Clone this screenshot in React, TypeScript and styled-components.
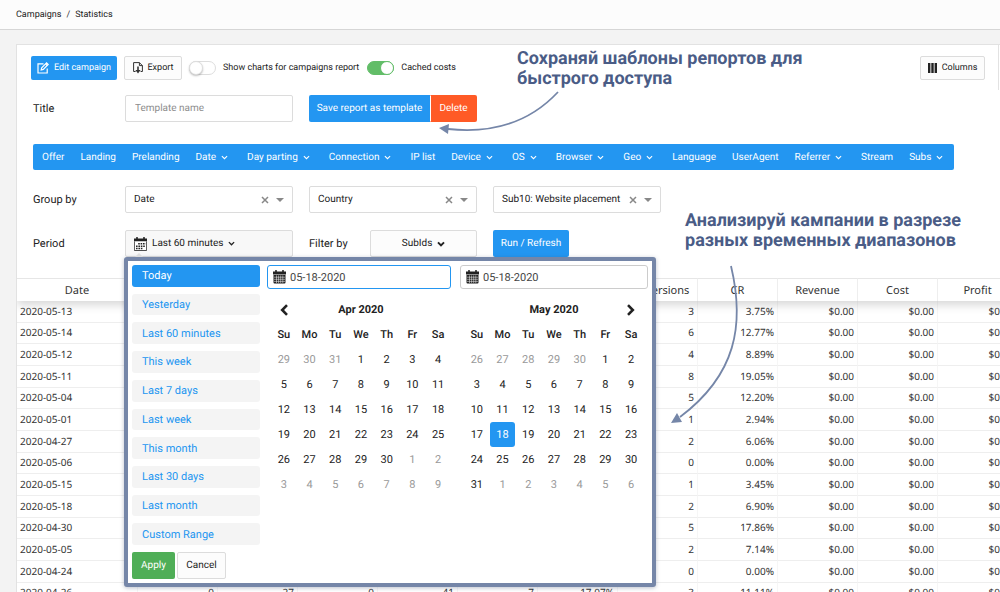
import React from "react";
import styled, { createGlobalStyle } from "styled-components";

const blue = "#2396f1";
const slate = "#7586a8";
const line = "#dcdcdc";

const Global = createGlobalStyle`
  *, *::before, *::after { box-sizing: border-box; }
  body {
    margin: 0;
    background: #f3f3f3;
    color: #333;
    font-family: Roboto, sans-serif;
    font-size: 10px;
    text-rendering: geometricPrecision;
  }
  button, input, select {
    font-family: inherit;
    font-size: inherit;
    color: inherit;
    text-rendering: inherit;
    margin: 0;
  }
  button { cursor: pointer; }
`;

const Page = styled.div`
  position: relative;
  height: 100vh;
  overflow: hidden;
`;

const Breadcrumbs = styled.nav`
  display: flex;
  align-items: center;
  gap: 5px;
  height: 30px;
  padding: 0 16px;
  font-size: 9px;
  background: #fcfcfc;
  border-bottom: 1px solid #d6d6d6;
  a { color: #222; text-decoration: none; }
`;

const Card = styled.main`
  margin: 14px 0 0 16px;
  background: #fff;
  border: 1px solid #e2e2e2;
  border-right: 0;
`;

const Toolbar = styled.div`
  display: flex;
  align-items: center;
  height: 45px;
  margin-right: 1px;
  padding: 0 13px 0 14px;
  border-right: 1px solid #e2e2e2;
`;

const Button = styled.button<{ $tone?: "blue" | "red" | "green"; $h?: number; $w?: number; $size?: number }>`
  display: inline-flex;
  align-items: center;
  justify-content: center;
  gap: 5px;
  height: ${(p) => p.$h ?? 27}px;
  width: ${(p) => (p.$w ? `${p.$w}px` : "auto")};
  padding: 0 ${(p) => (p.$w ? 0 : 8)}px;
  white-space: nowrap;
  font-size: ${(p) => p.$size ?? 10}px;
  border-radius: 2px;
  border: 1px solid ${(p) => (p.$tone ? "transparent" : line)};
  background: ${(p) =>
    p.$tone === "blue" ? blue : p.$tone === "red" ? "#ff5a26" : p.$tone === "green" ? "#4fae57" : "#fcfcfc"};
  color: ${(p) => (p.$tone ? "#fff" : "#222")};
`;

const ExportSlot = styled.div`
  margin: 0 7px;
`;

const Switch = styled.label`
  display: flex;
  align-items: center;
  gap: 7px;
  margin-right: 8px;
  font-size: 9px;
  color: #222;
  input {
    appearance: none;
    position: relative;
    width: 27px;
    height: 14px;
    border-radius: 7px;
    border: 1px solid #ddd;
    background: #fff;
  }
  input::after {
    content: "";
    position: absolute;
    top: -1px;
    left: -1px;
    width: 14px;
    height: 14px;
    border-radius: 50%;
    background: #fff;
    border: 1px solid #ddd;
    box-shadow: 0 1px 2px rgba(0, 0, 0, 0.25);
  }
  input:checked { background: #62bd68; border-color: #62bd68; }
  input:checked::after { left: 12px; border-color: #62bd68; box-shadow: none; }
`;

const Spacer = styled.div`
  flex: 1;
`;

const Form = styled.div`
  display: flex;
  flex-direction: column;
  gap: 17px;
  padding: 5px 16px 21px;
`;

const Row = styled.div`
  display: grid;
  grid-template-columns: 76px 168px 168px 168px;
  column-gap: 16px;
  align-items: center;
`;

const Label = styled.label`
  font-size: 11px;
  color: #222;
`;

const TextInput = styled.input`
  width: 100%;
  height: 27px;
  padding: 0 9px;
  border: 1px solid ${line};
  border-radius: 2px;
  background: #fff;
  &::placeholder { color: #8d8d8d; }
`;

const Group = styled.div`
  display: flex;
  ${Button}:first-child { border-radius: 2px 0 0 2px; }
  ${Button}:last-child { border-radius: 0 2px 2px 0; border-left-color: #fff; }
`;

const Menu = styled.nav`
  display: flex;
  align-items: center;
  align-self: flex-start;
  height: 26px;
  margin: 5px 0 -1px;
  padding-left: 1px;
  border-radius: 2px;
  background: ${blue};
`;

const MenuItem = styled.button<{ $drop?: boolean }>`
  display: flex;
  align-items: center;
  gap: 5px;
  height: 26px;
  padding: 0 ${(p) => (p.$drop ? 11 : 8)}px 0 8px;
  border: 0;
  background: none;
  color: #fff;
  white-space: nowrap;
`;

const SelectBox = styled.div`
  position: relative;
  display: grid;
  select {
    appearance: none;
    width: 100%;
    height: 27px;
    padding: 0 36px 0 8px;
    border: 1px solid ${line};
    border-radius: 2px;
    background: #fff;
    color: #222;
  }
`;

const SelectTools = styled.div`
  position: absolute;
  right: 9px;
  top: 0;
  height: 27px;
  display: flex;
  align-items: center;
  gap: 7px;
  button { display: flex; padding: 0; border: 0; background: none; }
`;

const PeriodField = styled.div`
  position: relative;
`;

const PeriodButton = styled(Button)`
  width: 100%;
  justify-content: flex-start;
  background: #f8f8f8;
`;

const FilterField = styled.div`
  display: flex;
  align-items: center;
  justify-content: space-between;
`;

const Popup = styled.section`
  position: absolute;
  z-index: 2;
  top: 27px;
  left: -1px;
  display: flex;
  width: 532px;
  height: 330px;
  padding: 4px;
  border: 4px solid ${slate};
  border-radius: 3px;
  background: #fff;
  box-shadow: 0 1px 4px rgba(60, 75, 110, 0.35);
  &::before {
    content: "";
    position: absolute;
    z-index: -1;
    left: 7px;
    top: -8px;
    border: 4px solid transparent;
    border-top: 0;
    border-bottom-color: #ddd;
  }
`;

const Presets = styled.div`
  display: flex;
  flex-direction: column;
  gap: 7px;
  width: 128px;
  margin-right: 7px;
`;

const Preset = styled.button<{ $on?: boolean }>`
  height: 22px;
  padding: 0 10px;
  text-align: left;
  font-size: 11px;
  border: 0;
  border-radius: 3px;
  background: ${(p) => (p.$on ? blue : "#f4f4f4")};
  color: ${(p) => (p.$on ? "#fff" : blue)};
`;

const Actions = styled.div`
  display: flex;
  gap: 2px;
`;

const Month = styled.div`
  width: 184px;
  margin-right: 9px;
  &:last-child { width: 188px; margin-right: 0; }
`;

const DateField = styled.label<{ $on?: boolean }>`
  display: flex;
  align-items: center;
  gap: 4px;
  height: 24px;
  padding: 0 5px;
  border: 1px solid ${(p) => (p.$on ? blue : "#ccc")};
  border-radius: 3px;
  input {
    width: 100%;
    min-width: 0;
    padding: 0;
    border: 0;
    outline: 0;
    font-size: 11px;
    color: #444;
    background: none;
  }
`;

const Calendar = styled.table`
  width: 180px;
  margin: 8px 0 0 4px;
  table-layout: fixed;
  border-collapse: collapse;
  font-size: 11px;
  text-align: center;
  tr { height: 25px; }
  th, td { padding: 0; }
  th { font-weight: 500; color: #222; }
`;

const Title = styled.th`
  && { font-weight: 700; }
`;

const Arrow = styled.button`
  display: flex;
  justify-content: center;
  width: 100%;
  padding: 0;
  border: 0;
  background: none;
`;

const Day = styled.td<{ $off?: boolean; $on?: boolean }>`
  color: ${(p) => (p.$on ? "#fff" : p.$off ? "#999" : "#222")};
  background: ${(p) => (p.$on ? blue : "none")};
  border-radius: 3px;
`;

const Report = styled.table`
  width: 1001px;
  table-layout: fixed;
  border-collapse: separate;
  border-spacing: 0;
  font-family: "Noto Sans", sans-serif;
  font-size: 10px;
  thead { position: relative; box-shadow: 0 4px 10px rgba(0, 0, 0, 0.16); }
  th {
    height: 23px;
    padding: 0;
    font-size: 11px;
    line-height: 15px;
    font-weight: 400;
    text-align: center;
    background: #fff;
    border-top: 1px solid #e6e6e6;
    border-right: 1px solid #eee;
  }
  td {
    height: 22px;
    padding: 0 3px 2px;
    line-height: 14px;
    text-align: right;
    border-bottom: 1px solid #eee;
    border-right: 1px solid #f6f6f6;
  }
  td:first-child { text-align: left; }
  tbody tr:nth-child(3n + 2) td { height: 21px; }
`;

const ReportWrap = styled.div`
  overflow: hidden;
`;

const Note = styled.p<{ $x: number; $y: number }>`
  position: absolute;
  left: ${(p) => p.$x}px;
  top: ${(p) => p.$y}px;
  margin: 0;
  font-size: 18px;
  line-height: 20px;
  font-weight: 700;
  color: #4a5c86;
  white-space: nowrap;
`;

const Arrows = styled.svg`
  position: absolute;
  z-index: 3;
  left: 0;
  top: 0;
  pointer-events: none;
`;

const Chevron = ({ w = 7, sw = 1.2 }: { w?: number; sw?: number }) => (
  <svg width={w} height={w} viewBox="0 0 8 8" fill="none" stroke="currentColor" strokeWidth={sw}>
    <path d="M1 2.4 4 5.4 7 2.4" />
  </svg>
);

const IconSvg = styled.svg`
  flex-shrink: 0;
`;

const CalendarIcon = ({ open }: { open?: boolean }) => (
  <IconSvg width="13" height="14" viewBox="0 0 13 14" fill="#222">
    <path d="M0 1.5h2.2V.6a.8.8 0 0 1 1.6 0v.9h5.4V.6a.8.8 0 0 1 1.6 0v.9H13v3H0z" />
    {open ? (
      <>
        <path d="M.4 4.5V13.5h12.2V4.5" fill="#fff" stroke="#222" strokeWidth=".8" />
        <path
          d="M4.2 6.8H11.6M2 9.2H11.6M2 11.6H9"
          stroke="#222"
          strokeWidth="1.5"
          strokeDasharray="1.6 .8"
        />
      </>
    ) : (
      <>
        <path d="M.5 5h12v7.5a1 1 0 0 1-1 1h-10a1 1 0 0 1-1-1z" />
        <path d="M1 7.2H12M1 9.3H12M1 11.4H12M3.5 5.4V13M5.6 5.4V13M7.7 5.4V13M9.8 5.4V13" stroke="#fff" strokeWidth=".5" />
      </>
    )}
  </IconSvg>
);

const EditIcon = () => (
  <svg width="12" height="12" viewBox="0 0 12 12" fill="none" stroke="#fff" strokeWidth="1.2">
    <path d="M6.5 1.8H1v9.2h9.2V6.5" />
    <path d="M4.2 8 4.7 5.8 9.6 .9 11.2 2.5 6.3 7.4z" />
    <path d="M8.6 2 10.1 3.5" />
  </svg>
);

const ExportIcon = () => (
  <svg width="10" height="12" viewBox="0 0 10 12" fill="none" stroke="#333" strokeWidth="1">
    <path d="M2.6 9.5H.6V.6H6.4L9.4 3.6V9.5H7.6" />
    <path d="M6.4 .6V3.6H9.4" />
    <path d="M5 4.5V9" strokeWidth="1.6" />
    <path d="M2.4 8H7.6L5 11.6z" fill="#333" stroke="none" />
  </svg>
);

const ColumnsIcon = () => (
  <svg width="9" height="10" viewBox="0 0 9 10" fill="#222">
    <path d="M0 0h2.4v10H0zM3.3 0h2.4v10H3.3zM6.6 0H9v10H6.6z" />
  </svg>
);

const BigChevron = ({ right }: { right?: boolean }) => (
  <svg width="10" height="12" viewBox="0 0 10 12" fill="none" stroke="#222" strokeWidth="2.6">
    <path d={right ? "M2 1.2 6.8 6 2 10.8" : "M8 1.2 3.2 6 8 10.8"} />
  </svg>
);

const menu: [string, boolean][] = [
  ["Offer", false], ["Landing", false], ["Prelanding", false], ["Date", true],
  ["Day parting", true], ["Connection", true], ["IP list", false], ["Device", true],
  ["OS", true], ["Browser", true], ["Geo", true], ["Language", false],
  ["UserAgent", false], ["Referrer", true], ["Stream", false], ["Subs", true],
];

const presets = [
  "Today", "Yesterday", "Last 60 minutes", "This week", "Last 7 days",
  "Last week", "This month", "Last 30 days", "Last month", "Custom Range",
];

const rows: [string, string, string][] = [
  ["2020-05-13", "3", "3.75%"],
  ["2020-05-14", "6", "12.77%"],
  ["2020-05-12", "4", "8.89%"],
  ["2020-05-11", "8", "19.05%"],
  ["2020-05-04", "5", "12.20%"],
  ["2020-05-01", "1", "2.94%"],
  ["2020-04-27", "2", "6.06%"],
  ["2020-05-06", "0", "0.00%"],
  ["2020-05-15", "1", "3.45%"],
  ["2020-05-18", "2", "6.90%"],
  ["2020-04-30", "5", "17.86%"],
  ["2020-05-05", "2", "7.14%"],
  ["2020-04-24", "0", "0.00%"],
  ["2020-04-26", "3", "11.11%"],
];

const lastRow = ["0", "27", "0", "41", "7", "17.07%"];

function GroupSelect({ value, label }: { value: string; label: string }) {
  return (
    <SelectBox>
      <select aria-label={label} defaultValue={value}>
        <option>{value}</option>
      </select>
      <SelectTools>
        <button aria-label={`Clear ${value}`}>
          <svg width="8" height="8" viewBox="0 0 8 8" stroke="#888" strokeWidth="1.5">
            <path d="M1 1 7 7M7 1 1 7" />
          </svg>
        </button>
        <svg width="8" height="4" viewBox="0 0 8 4" fill="#888">
          <path d="M0 0H8L4 4z" />
        </svg>
      </SelectTools>
    </SelectBox>
  );
}

function MonthTable({ title, lead, days, leadEnd, selected, next }: {
  title: string; lead: number; days: number; leadEnd: number; selected?: number; next?: boolean;
}) {
  const cells = Array.from({ length: 42 }, (_, i) => {
    const d = i - lead + 1;
    if (d < 1) return { n: leadEnd + d, off: true };
    if (d > days) return { n: d - days, off: true };
    return { n: d, off: false };
  });
  return (
    <Calendar>
      <thead>
        <tr>
          <th>{!next && <Arrow aria-label="Previous month"><BigChevron /></Arrow>}</th>
          <Title colSpan={5}>{title}</Title>
          <th>{next && <Arrow aria-label="Next month"><BigChevron right /></Arrow>}</th>
        </tr>
        <tr>
          {["Su", "Mo", "Tu", "We", "Th", "Fr", "Sa"].map((d) => <th key={d}>{d}</th>)}
        </tr>
      </thead>
      <tbody>
        {[0, 1, 2, 3, 4, 5].map((w) => (
          <tr key={w}>
            {cells.slice(w * 7, w * 7 + 7).map((c, i) => (
              <Day key={i} $off={c.off} $on={!c.off && c.n === selected}>{c.n}</Day>
            ))}
          </tr>
        ))}
      </tbody>
    </Calendar>
  );
}

function PeriodPopup() {
  return (
    <Popup aria-label="Period">
      <Presets>
        {presets.map((p, i) => <Preset key={p} $on={i === 0}>{p}</Preset>)}
        <Actions>
          <Button $tone="green">Apply</Button>
          <Button $w={49}>Cancel</Button>
        </Actions>
      </Presets>
      <Month>
        <DateField $on>
          <CalendarIcon />
          <input aria-label="Start date" defaultValue="05-18-2020" />
        </DateField>
        <MonthTable title="Apr 2020" lead={3} days={30} leadEnd={31} />
      </Month>
      <Month>
        <DateField>
          <CalendarIcon />
          <input aria-label="End date" defaultValue="05-18-2020" />
        </DateField>
        <MonthTable title="May 2020" lead={5} days={31} leadEnd={30} selected={18} next />
      </Month>
    </Popup>
  );
}

export default function App() {
  return (
    <Page>
      <Global />
      <Breadcrumbs>
        <a href="#campaigns">Campaigns</a>
        <span>/</span>
        <a href="#statistics">Statistics</a>
      </Breadcrumbs>
      <Card>
        <Toolbar>
          <Button $tone="blue" $h={24} $w={86} $size={9}><EditIcon />Edit campaign</Button>
          <ExportSlot>
            <Button $h={24} $w={58} $size={9}><ExportIcon />Export</Button>
          </ExportSlot>
          <Switch><input type="checkbox" />Show charts for campaigns report</Switch>
          <Switch><input type="checkbox" defaultChecked />Cached costs</Switch>
          <Spacer />
          <Button $h={24} $w={65} $size={9}><ColumnsIcon />Columns</Button>
        </Toolbar>
        <Form>
          <Row>
            <Label htmlFor="title">Title</Label>
            <TextInput id="title" placeholder="Template name" />
            <Group>
              <Button $tone="blue" $w={121}>Save report as template</Button>
              <Button $tone="red" $w={47}>Delete</Button>
            </Group>
          </Row>
          <Menu>
            {menu.map(([name, drop]) => (
              <MenuItem key={name} $drop={drop}>{name}{drop && <Chevron />}</MenuItem>
            ))}
          </Menu>
          <Row>
            <Label as="span">Group by</Label>
            <GroupSelect label="First grouping" value="Date" />
            <GroupSelect label="Second grouping" value="Country" />
            <GroupSelect label="Third grouping" value="Sub10: Website placement" />
          </Row>
          <Row>
            <Label htmlFor="period">Period</Label>
            <PeriodField>
              <PeriodButton id="period"><CalendarIcon open />Last 60 minutes<Chevron sw={1.5} /></PeriodButton>
              <PeriodPopup />
            </PeriodField>
            <FilterField>
              <Label htmlFor="filter">Filter by</Label>
              <Button id="filter" $w={107}>SubIds<Chevron w={8} sw={2} /></Button>
            </FilterField>
            <div>
              <Button $tone="blue" $w={76}>Run / Refresh</Button>
            </div>
          </Row>
        </Form>
        <ReportWrap>
          <Report>
            <colgroup>
              <col style={{ width: 121 }} />
            </colgroup>
            <thead>
              <tr>
                <th>Date</th>
                <th /><th /><th /><th /><th /><th />
                <th>Conversions</th>
                <th>CR</th>
                <th>Revenue</th>
                <th>Cost</th>
                <th>Profit</th>
              </tr>
            </thead>
            <tbody>
              {rows.map(([date, conv, cr], r) => (
                <tr key={date}>
                  <td>{date}</td>
                  {lastRow.map((v, i) => <td key={i}>{r === rows.length - 1 ? v : ""}</td>)}
                  <td>{conv}</td>
                  <td>{cr}</td>
                  <td>$0.00</td>
                  <td>$0.00</td>
                  <td>$0.00</td>
                </tr>
              ))}
            </tbody>
          </Report>
        </ReportWrap>
      </Card>
      <Note $x={517} $y={49}>Сохраняй шаблоны репортов для<br />быстрого доступа</Note>
      <Note $x={685} $y={211}>Анализируй кампании в разрезе<br />разных временных диапазонов</Note>
      <Arrows width="1000" height="592" viewBox="0 0 1000 592" fill="none" stroke={slate} strokeWidth="1.8">
        <path d="M558 92C530 122 494 134 448 129" />
        <path d="M439 128 449 124 448 134z" fill={slate} stroke="none" />
        <path d="M731 266C745 325 736 375 680 417" />
        <path d="M671 423 677 413 682 422z" fill={slate} stroke="none" />
      </Arrows>
    </Page>
  );
}
